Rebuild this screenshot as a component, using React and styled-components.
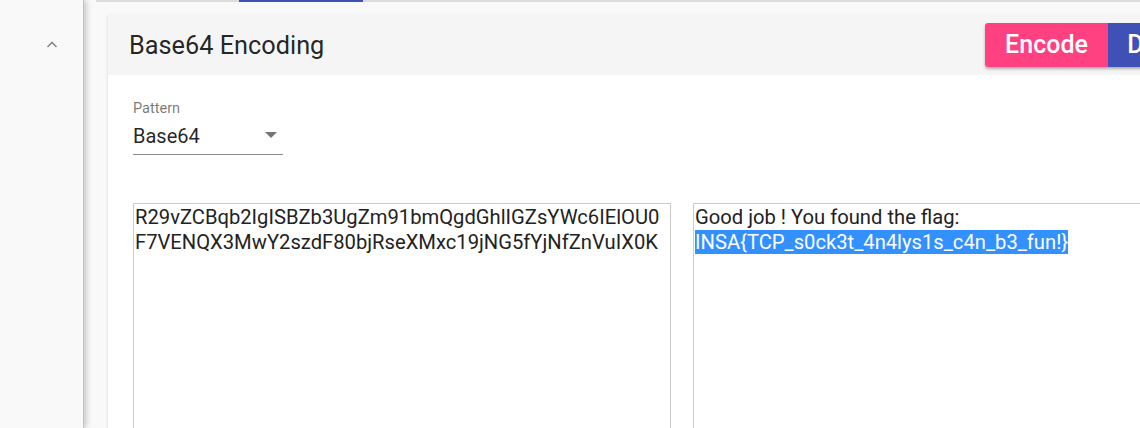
import React from "react";
import styled, { createGlobalStyle } from "styled-components";

const Global = createGlobalStyle`
  html, body { margin: 0; padding: 0; }
  body {
    width: 1140px;
    height: 428px;
    overflow: hidden;
    background: #fafafa;
    font-family: Roboto, "Noto Sans", Arial, sans-serif;
    color: rgba(0,0,0,0.87);
  }
`;

const Shell = styled.div`
  display: flex;
  width: 1140px;
  height: 428px;
  overflow: hidden;
`;

const Sidebar = styled.aside`
  flex: 0 0 83px;
  background: #f9f9f9;
  position: relative;
  z-index: 2;
  box-shadow: 1px 0 0 #c4c4c4, 3px 0 6px rgba(0, 0, 0, 0.22);
  display: flex;
  justify-content: center;
  padding-top: 40px;
  box-sizing: border-box;
  padding-left: 20px;
`;

const Chevron = styled.svg`
  width: 12px;
  height: 10px;
  display: block;
`;

const Main = styled.main`
  flex: 1;
  min-width: 0;
  background: #f9f9f9;
  padding-left: 13px;
  display: flex;
  flex-direction: column;
  overflow: hidden;
`;

const TabStrip = styled.div`
  height: 2px;
  background: #dcdcdc;
  display: flex;
  padding-left: 143px;
  flex: 0 0 auto;
`;

const TabInk = styled.div`
  width: 124px;
  height: 2px;
  background: #3f51b5;
`;

const CardArea = styled.div`
  padding: 13px 0 0 12px;
`;

const Card = styled.section`
  width: 1132px;
  background: #fff;
  box-shadow: 0 1px 3px rgba(0,0,0,0.14), 0 1px 1px rgba(0,0,0,0.06);
`;

const CardHeader = styled.header`
  height: 60px;
  background: #f5f5f5;
  display: flex;
  align-items: center;
  justify-content: space-between;
  padding: 0 9px 0 21px;
`;

const Title = styled.h2`
  margin: 0;
  font-size: 25.3px;
  font-weight: 400;
  color: rgba(0,0,0,0.87);
`;

const ButtonGroup = styled.div`
  display: flex;
  border-radius: 3px;
  overflow: hidden;
  box-shadow: 0 2px 3px rgba(0,0,0,0.3);
  margin-top: -1px;
`;

const ActionButton = styled.button`
  width: 123px;
  height: 44px;
  border: none;
  background: ${(p) => p.$color};
  color: #fff;
  font-family: Roboto, Arial, sans-serif;
  font-size: 25px;
  font-weight: 500;
  padding: 0;
  cursor: pointer;
`;

const CardBody = styled.div`
  padding: 25px 0 0 25px;
`;

const Field = styled.div`
  width: 150px;
  display: flex;
  flex-direction: column;
`;

const FieldLabel = styled.label`
  font-size: 14.5px;
  color: rgba(0,0,0,0.54);
  line-height: 17px;
`;

const SelectBox = styled.div`
  display: flex;
  align-items: center;
  justify-content: space-between;
  height: 37px;
  box-sizing: border-box;
  border-bottom: 1px solid rgba(0,0,0,0.45);
  font-size: 20px;
  color: rgba(0,0,0,0.87);
  padding-right: 6px;
  margin-top: 1px;
`;

const Caret = styled.span`
  width: 0;
  height: 0;
  border-left: 6.5px solid transparent;
  border-right: 6.5px solid transparent;
  border-top: 6px solid #757575;
  margin-top: -3px;
`;

const Panes = styled.div`
  display: grid;
  grid-template-columns: 538px 538px;
  column-gap: 22px;
  margin-top: 48px;
`;

const TextBox = styled.div`
  height: 260px;
  border: 1px solid #cbcbcb;
  box-sizing: border-box;
  padding: 1px 1px;
  font-size: 20.2px;
  line-height: 24.5px;
  color: #222;
  word-break: break-all;
  white-space: pre-wrap;
  background: #fff;
`;

const Selected = styled.span`
  background: #3390ff;
  color: #fff;
`;

export default function App() {
  return (
    <>
      <Global />
      <Shell>
        <Sidebar>
          <Chevron viewBox="0 0 12 10">
            <polyline points="1.5,7 6,2.5 10.5,7" fill="none" stroke="#8a8a8a" strokeWidth="1.6" />
          </Chevron>
        </Sidebar>
        <Main>
          <TabStrip>
            <TabInk />
          </TabStrip>
          <CardArea>
            <Card>
              <CardHeader>
                <Title>Base64 Encoding</Title>
                <ButtonGroup>
                  <ActionButton $color="#ff4081">Encode</ActionButton>
                  <ActionButton $color="#3f51b5">Decode</ActionButton>
                </ButtonGroup>
              </CardHeader>
              <CardBody>
                <Field>
                  <FieldLabel>Pattern</FieldLabel>
                  <SelectBox>
                    <span>Base64</span>
                    <Caret />
                  </SelectBox>
                </Field>
                <Panes>
                  <TextBox>R29vZCBqb2IgISBZb3UgZm91bmQgdGhlIGZsYWc6IElOU0F7VENQX3MwY2szdF80bjRseXMxc19jNG5fYjNfZnVuIX0K</TextBox>
                  <TextBox>
                    {"Good job ! You found the flag:\n"}
                    <Selected>INSA{"{"}TCP_s0ck3t_4n4lys1s_c4n_b3_fun!{"}"}</Selected>
                  </TextBox>
                </Panes>
              </CardBody>
            </Card>
          </CardArea>
        </Main>
      </Shell>
    </>
  );
}
